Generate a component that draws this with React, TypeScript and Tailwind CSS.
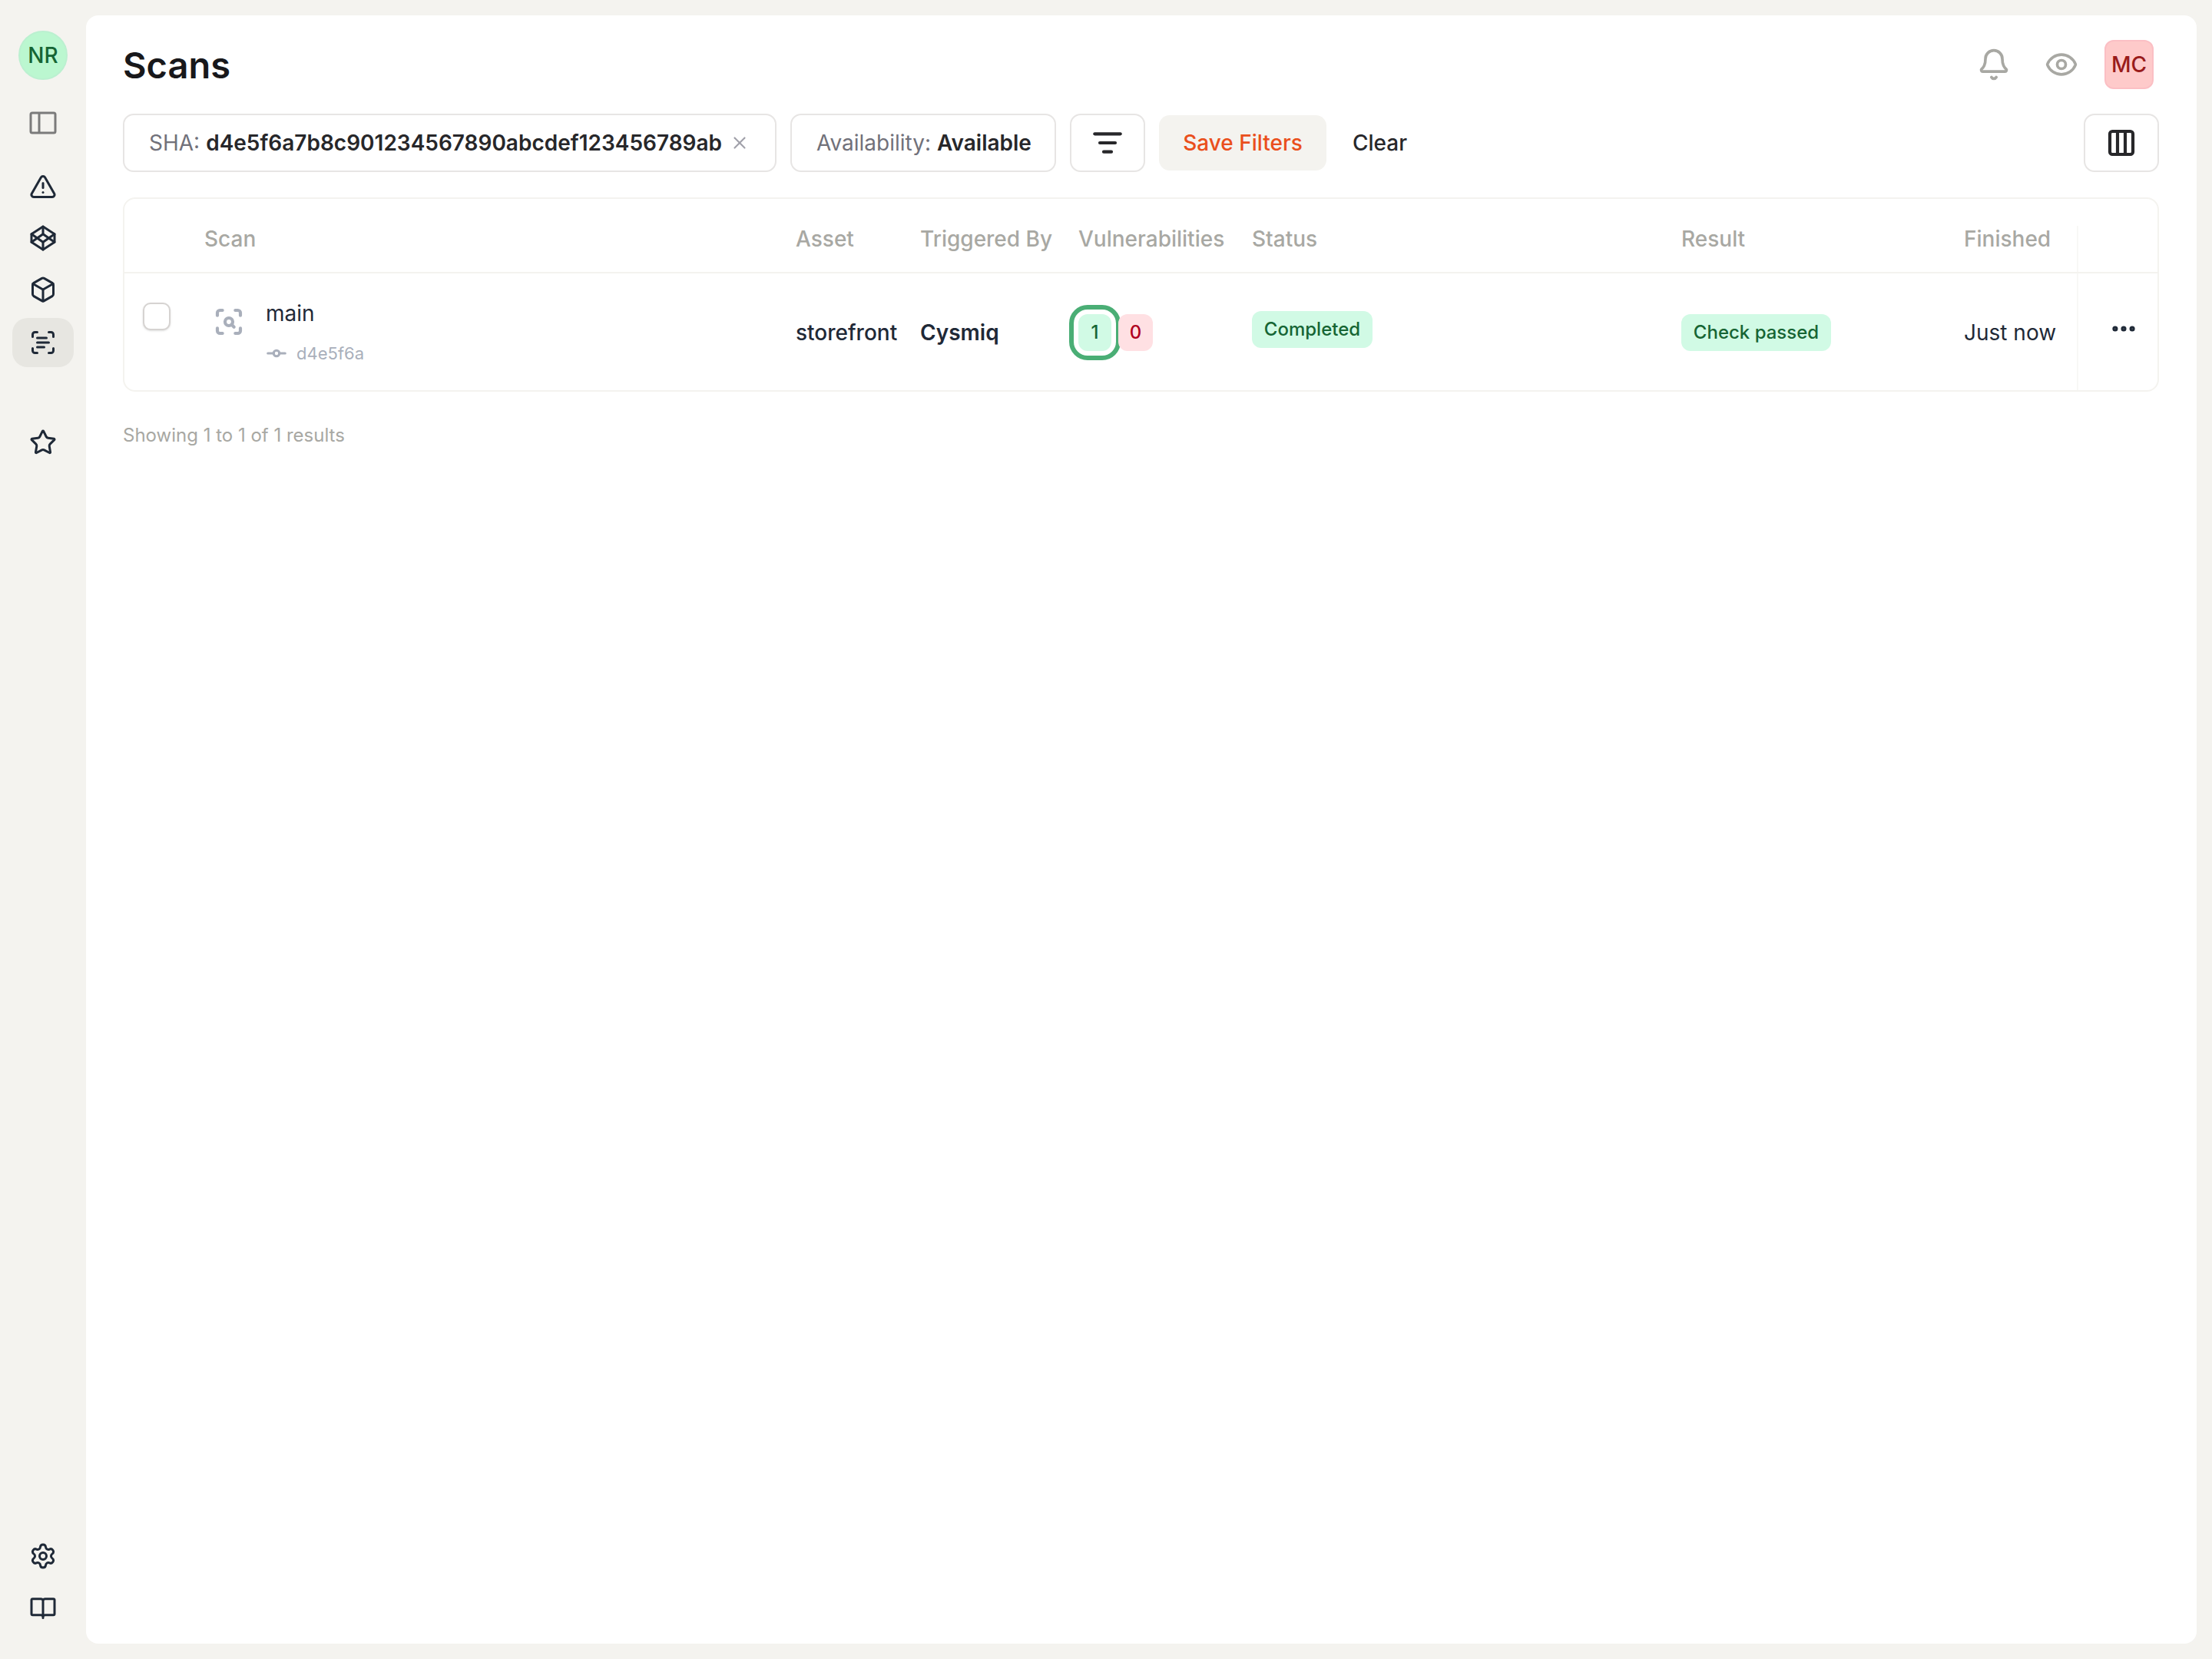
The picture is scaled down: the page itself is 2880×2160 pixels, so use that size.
import {
  Bell,
  Box,
  Codepen,
  Columns3,
  Ellipsis,
  Eye,
  GitCommitHorizontal,
  ListFilter,
  ScanSearch,
  ScanText,
  Settings,
  Star,
  TriangleAlert,
  X,
} from 'lucide-react';

const cols = 'grid grid-cols-[104px_770px_162px_206px_226px_559px_368px_147px_103px]';

function SidebarIcon() {
  return (
    <svg width="36" height="30" viewBox="0 0 36 30" fill="none" stroke="currentColor" strokeWidth="3" className="mt-[41px] text-[#7b7b7b]">
      <rect x="2" y="2" width="32" height="26" rx="2" />
      <path d="M13 2v26" />
    </svg>
  );
}

function BookIcon() {
  return (
    <svg width="36" height="36" viewBox="0 0 24 24" fill="none" stroke="currentColor" strokeWidth="2" strokeLinecap="round" strokeLinejoin="round" className="mt-[31px]">
      <path d="M12 21V6a2 2 0 0 0-2-1.5H3a1 1 0 0 0-1 1v12a1 1 0 0 0 1 1h7a2 2 0 0 1 2 1.5 2 2 0 0 1 2-1.5h7a1 1 0 0 0 1-1v-12a1 1 0 0 0-1-1h-7a2 2 0 0 0-2 1.5" />
    </svg>
  );
}

function Sidebar() {
  return (
    <aside className="flex h-full w-[112px] shrink-0 flex-col items-center pt-[40px] pb-[49px] text-[#1f2937]">
      <div className="grid h-[64px] w-[64px] place-items-center rounded-full border-2 border-[#bbf0d0] bg-[#bbf7d0] text-[28px] font-medium text-[#166534]">
        NR
      </div>
      <SidebarIcon />
      <TriangleAlert size={36} className="mt-[50px]" />
      <Codepen size={36} className="mt-[31px]" />
      <Box size={36} className="mt-[31px]" />
      <div className="mt-[19px] grid h-[64px] w-[80px] place-items-center rounded-[20px] bg-[#e7e6e1]">
        <ScanText size={36} />
      </div>
      <Star size={36} className="mt-[80px]" />
      <div className="flex-1" />
      <Settings size={36} />
      <BookIcon />
    </aside>
  );
}

function FilterPill({ label, value, width, onClear }: { label: string; value: string; width: string; onClear?: boolean }) {
  return (
    <div className={`${width} flex h-[76px] items-center rounded-[14px] border-2 border-[#e7e5e4] bg-white pl-[32px] text-[28px]`}>
      <span className="text-[#71717a]">{label}:</span>
      <span className="ml-[8px] font-semibold text-[#27272a]">{value}</span>
      {onClear && <X size={26} className="ml-[10px] text-[#a1a1aa]" />}
    </div>
  );
}

export default function App() {
  return (
    <div className="flex h-[2160px] w-[2880px] bg-[#f4f3ef] font-['Inter',sans-serif]">
      <Sidebar />
      <main className="mt-[20px] mb-[20px] mr-[20px] flex-1 rounded-[16px] bg-white pl-[48px] pr-[49px]">
        <div className="flex h-[128px] items-center justify-between">
          <h1 className="text-[47px] font-semibold leading-none text-[#18181b]">Scans</h1>
          <div className="flex items-center text-[#a8a8a3]">
            <Bell size={44} strokeWidth={2} />
            <Eye size={44} strokeWidth={2} className="ml-[44px]" />
            <div className="ml-[34px] mr-[7px] grid h-[64px] w-[64px] place-items-center rounded-[12px] border-2 border-[#fbbfc4] bg-[#fecaca] text-[28px] font-medium text-[#991b1b]">
              MC
            </div>
          </div>
        </div>

        <div className="flex items-center">
          <FilterPill label="SHA" value="d4e5f6a7b8c901234567890abcdef123456789ab" width="w-[851px]" onClear />
          <div className="ml-[18px]">
            <FilterPill label="Availability" value="Available" width="w-[346px]" />
          </div>
          <button className="ml-[18px] grid h-[76px] w-[98px] place-items-center rounded-[14px] border-2 border-[#e7e5e4] bg-white text-[#27272a]">
            <ListFilter size={40} strokeWidth={2.5} />
          </button>
          <button className="ml-[18px] h-[72px] w-[218px] rounded-[14px] bg-[#f4f3ef] text-[28px] font-medium text-[#ea4f1c]">
            Save Filters
          </button>
          <span className="ml-[34px] text-[28px] font-medium text-[#27272a]">Clear</span>
          <button className="ml-auto grid h-[76px] w-[98px] place-items-center rounded-[14px] border-2 border-[#e7e5e4] bg-white text-[#27272a]">
            <Columns3 size={40} strokeWidth={2.5} />
          </button>
        </div>

        <div className="mt-[33px] rounded-[16px] border-2 border-[#f4f3ef]">
          <div className={`${cols} h-[97px] border-b-2 border-[#f4f3ef] text-[28px] font-medium text-[#a8a8a3]`}>
            <div />
            <div className="pt-[31px]">Scan</div>
            <div className="pt-[31px]">Asset</div>
            <div className="pt-[31px]">Triggered By</div>
            <div className="pt-[31px]">Vulnerabilities</div>
            <div className="pt-[31px]">Status</div>
            <div className="pt-[31px]">Result</div>
            <div className="pt-[31px]">Finished</div>
            <div className="mt-[35px] border-l-2 border-[#f8f8f6]" />
          </div>
          <div className={`${cols} h-[152px] text-[28px] text-[#1f2937]`}>
            <div className="pl-[24px] pt-[38px]">
              <div className="h-[36px] w-[36px] rounded-[10px] border-2 border-[#d6d3d1] bg-white shadow-sm" />
            </div>
            <div className="flex pt-[43px]">
              <ScanSearch size={40} strokeWidth={2.5} className="ml-[12px] text-[#a9afbb]" />
              <div className="ml-[28px] -mt-[8px]">
                <div className="leading-[34px]">main</div>
                <div className="mt-[20px] flex items-center text-[22px] leading-[30px] text-[#a9afbb]">
                  <GitCommitHorizontal size={30} strokeWidth={2.5} className="-ml-[1px]" />
                  <span className="ml-[11px]">d4e5f6a</span>
                </div>
              </div>
            </div>
            <div className="flex items-center pt-[2px] font-medium">storefront</div>
            <div className="flex items-center pt-[2px] font-semibold">Cysmiq</div>
            <div className="flex items-center pt-[2px] text-[24px] font-medium">
              <span className="grid h-[48px] w-[43px] place-items-center rounded-[12px] bg-[#d1fae5] text-[#166534] outline-[6px] outline-offset-[6px] outline-[#4aae75]">
                1
              </span>
              <span className="ml-[9px] grid h-[48px] w-[45px] place-items-center rounded-[12px] bg-[#ffe0e3] text-[#b00020]">
                0
              </span>
            </div>
            <div className="flex items-center pb-[6px]">
              <span className="flex h-[48px] w-[157px] items-center justify-center rounded-[12px] bg-[#d1fae5] text-[24px] font-medium text-[#166534]">
                Completed
              </span>
            </div>
            <div className="flex items-center pt-[2px]">
              <span className="flex h-[48px] w-[195px] items-center justify-center rounded-[12px] bg-[#d1fae5] text-[24px] font-medium text-[#166534]">
                Check passed
              </span>
            </div>
            <div className="flex items-center pt-[2px]">Just now</div>
            <div className="flex items-center justify-center border-l-2 border-[#f8f8f6] pb-[8px] pl-[16px]">
              <Ellipsis size={38} strokeWidth={2.5} className="text-[#1f2937]" />
            </div>
          </div>
        </div>

        <p className="mt-[41px] text-[24px] leading-[32px] text-[#a8a8a3]">Showing 1 to 1 of 1 results</p>
      </main>
    </div>
  );
}
